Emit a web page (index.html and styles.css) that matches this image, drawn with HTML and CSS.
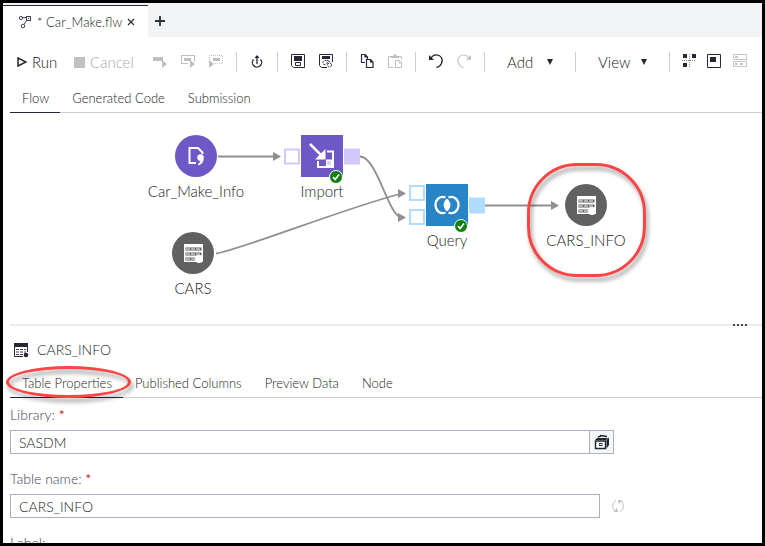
FILE: index.html
```html
<!DOCTYPE html>
<html lang="en">
<head>
<meta charset="utf-8">
<title>Car_Make.flw</title>
<link rel="stylesheet" href="styles.css">
</head>
<body>
<div class="app">
  <header class="filebar">
    <div class="file-tab">
      <svg class="flow-icon" width="14" height="14" viewBox="0 0 14 14" fill="none" stroke="#3d4250"><circle cx="3" cy="3" r="1.6"/><circle cx="5" cy="11" r="1.8"/><path d="M4.6 2.6H8M9 5 6 9.4"/><rect x="8.5" y="1.5" width="4" height="4"/><path d="M10.500 3v1"/></svg>
      <span class="file-name">* Car_Make.flw</span>
      <button class="close" aria-label="Close tab"><svg width="8" height="8" viewBox="0 0 8 8" stroke="#2b2f3d" stroke-width="1.2"><path d="m1 1 6 6M7 1 1 7"/></svg></button>
    </div>
    <button class="new-tab" aria-label="New tab"><svg width="10" height="10" viewBox="0 0 10 10" stroke="#2b2f3d" stroke-width="1.8"><path d="M5 0v10M0 5h10"/></svg></button>
  </header>

  <div class="toolbar" role="toolbar">
    <button class="run"><svg width="10" height="10" viewBox="0 0 10 10" fill="none" stroke="#20242f" stroke-width="1.5"><path d="M1 1v8l8-4z"/></svg>Run</button>
    <button class="cancel" disabled><svg width="11" height="11" viewBox="0 0 11 11" fill="#c1c1c1"><path d="M0 0h11v11H0z"/></svg>Cancel</button>
    <button class="tool" disabled aria-label="Run node"><svg width="16" height="16" viewBox="0 0 16 16" fill="#bfbfbf"><path d="M1 3h10v4H1zM10 6l5 4-5 4z"/></svg></button>
    <button class="tool" disabled aria-label="Run to node"><svg width="16" height="16" viewBox="0 0 16 16" fill="#bfbfbf"><path d="M1 1h14v7h-1V2H2v7h6v1H1z"/><path d="M4 4h7v3H4zM10 6l5 4-5 4z"/></svg></button>
    <button class="tool" disabled aria-label="Run from node"><svg width="16" height="16" viewBox="0 0 16 16" fill="#bfbfbf"><path d="M5 4h7v3H5zM1 6l5 4-5 4z"/><path d="M1.500 6V1.500h13v8H7" fill="none" stroke="#bfbfbf" stroke-dasharray="1 1"/></svg></button>
    <span class="sep"></span>
    <button class="tool" aria-label="Share"><svg width="16" height="16" viewBox="0 0 16 16" fill="none" stroke="#252936" stroke-width="1.3"><path d="M4.500 5.500a4.600 4.600 0 1 0 7 0M8 10V2"/><path d="m5.500 4 2.500-3 2.500 3z" fill="#252936" stroke="none"/></svg></button>
    <span class="sep"></span>
    <button class="tool" aria-label="Save"><svg width="16" height="16" viewBox="0 0 16 16" fill="none" stroke="#252936"><path d="M1.500 .5h13v13H3.500l-2-2z"/><path d="M4 2h8v5H4z" fill="#252936" stroke="none"/><path d="M5.500 8.500h5v3h-5z"/></svg></button>
    <button class="tool" aria-label="Save as"><svg width="16" height="16" viewBox="0 0 16 16" fill="none" stroke="#252936"><path d="M14.500 8V.5h-13v11l2 2H9"/><path d="M4 2h8v3H4z" fill="#252936" stroke="none"/><circle cx="7" cy="8.500" r="2.200" stroke-dasharray="2 1"/><circle cx="11.500" cy="11" r="2" stroke-dasharray="2 1"/><path d="m9 6 3 2"/></svg></button>
    <span class="sep"></span>
    <button class="tool" aria-label="Copy"><svg width="16" height="16" viewBox="0 0 16 16" fill="none" stroke="#252936" stroke-width="1.2"><path d="M6 8.500H2.500v-8H6L8.500 3v2M6 .5V3h2.500M7.500 5.500h4l2.500 2.500v5.500H7.500zM11.500 5.500V8H14"/></svg></button>
    <button class="tool" disabled aria-label="Paste"><svg width="16" height="16" viewBox="0 0 16 16" fill="none" stroke="#bfbfbf"><path d="M6.500 13.500h-5v-11H4M12 2.500h2.500V5M8.500 6.500h4l2 2v5h-6zM12 6.500v2.500h2.500"/><path d="M4 2h2l1-1.500h2L10 2h2v2H4z" fill="#bfbfbf" stroke="none"/></svg></button>
    <span class="sep"></span>
    <button class="tool" aria-label="Undo"><svg width="16" height="16" viewBox="0 0 16 16" fill="none" stroke="#252936" stroke-width="1.300"><path d="M3 4C5.500 0 11 0 13.300 3.500S13 12.500 8.500 13.500"/><path d="M1 1v5h5z" fill="#252936" stroke="none"/></svg></button>
    <button class="tool" disabled aria-label="Redo"><svg width="16" height="16" viewBox="0 0 16 16" fill="none" stroke="#c4c4c4" stroke-width="1.100"><path d="M13 4C10.500 0 5 0 2.700 3.500S3 12.500 7.500 13.500"/><path d="M15 1v5h-5z" fill="#c4c4c4" stroke="none"/></svg></button>
    <span class="sep"></span>
    <button class="menu">Add<svg width="6" height="6" viewBox="0 0 6 6" fill="#252936"><path d="M0 0h6L3 6z"/></svg></button>
    <span class="sep"></span>
    <button class="menu menu-wide">View<svg width="6" height="6" viewBox="0 0 6 6" fill="#252936"><path d="M0 0h6L3 6z"/></svg></button>
    <span class="sep"></span>
    <button class="tool tool-narrow" aria-label="Arrange nodes"><svg width="16" height="16" viewBox="0 0 16 16" fill="#252936"><path d="M2 0h4v4H2zM11 0h4v4h-4zM2 9h4v4H2z"/><path d="M1 6.500h14M8.500 0v14" stroke="#8a7f7a" stroke-dasharray="1 1"/></svg></button>
    <button class="tool tool-narrow" aria-label="Overview"><svg width="16" height="16" viewBox="0 0 16 16"><path d="M1.500 .5h13v13h-13z" fill="none" stroke="#252936"/><path d="M4 3h6v5H4z" fill="#252936"/></svg></button>
    <button class="tool" disabled aria-label="Swimlanes"><svg width="16" height="16" viewBox="0 0 16 16"><path d="M1.500 .5h13v5h-13zM1.500 7.500h13v5h-13z" fill="none" stroke="#c4c4c4"/><path d="M3 2h3v2H3zM3 9h3v2H3zM8 9h3v2H8z" fill="#c4c4c4"/></svg></button>
  </div>

  <nav class="tabs">
    <a href="#flow" class="tab active">Flow</a>
    <a href="#code" class="tab">Generated Code</a>
    <a href="#submission" class="tab">Submission</a>
  </nav>

  <main class="canvas">
    <svg class="wires" width="759" height="211" viewBox="3 113 759 211" fill="none" stroke="#8f8f8f" stroke-width="1.8">
      <path d="M218 156.500h57M216 253.500C243 249 345 208 400 194M360 156.500C376 156 388 213 400 217M485 205.500h68"/>
      <path d="m273 152 8 4.500-8 4.500zM398 189l8 4.500-8 4.500zM398 213l8 4.500-8 4.500zM551 201l8 4.500-8 4.500z" fill="#8f8f8f" stroke="none"/>
      <g stroke-width="2"><path d="M285 149.500h14v14h-14z" stroke="#d4c7fb"/><path d="M410 186h14v14h-14zM410 210h14v14h-14z" stroke="#b0dcff"/></g>
      <path d="M344 148.500h16v16h-16z" fill="#d4c7fb" stroke="none"/>
      <path d="M469 197.500h16v16h-16z" fill="#b0dcff" stroke="none"/>
    </svg>
    <div class="node node-file">
      <svg width="42" height="42" viewBox="0 0 42 42"><circle cx="21" cy="21" r="21" fill="#6d58c6"/><path d="M21 28h-6.500V13H23l4.500 4.500V19" fill="none" stroke="#fff" stroke-width="2"/><path d="M22.300 22.700a3.200 3.200 0 0 1 6.500-.4c.2 4-2 7.300-5.300 8.200l-.5-1.500c1.500-.7 2.300-1.800 2.400-3.200-1.700.2-3.100-1.200-3.100-3.100z" fill="#fff"/></svg>
      <span>Car_Make_Info</span>
    </div>
    <div class="node node-import">
      <svg width="42" height="42" viewBox="0 0 42 42"><path d="M0 0h42v42H0z" fill="#6d58c6"/><path d="m9 9 12 12" stroke="#fff" stroke-width="2.500"/><path d="M24.500 14v10.500H14z" fill="#fff"/><path d="M26 16.500h6V32H17v-6" fill="none" stroke="#fff" stroke-width="2"/><path d="M25 24.500h7V32h-7z" fill="#fff"/><path d="M26 26h4v4h-4z" fill="#d8d0f5"/></svg>
      <svg class="badge" width="14" height="14" viewBox="0 0 14 14"><circle cx="7" cy="7" r="6.500" fill="#108010" stroke="#fff"/><path d="m4 7.200 2.200 2.300L10 4.600" fill="none" stroke="#fff" stroke-width="1.700"/></svg>
      <span>Import</span>
    </div>
    <div class="node node-query">
      <svg width="42" height="42" viewBox="0 0 42 42"><path d="M0 0h42v42H0z" fill="#2784c6"/><path d="M19.500 13.500c-5-2.200-10 1.700-10 7.500s5 9.700 10 7.500M22.500 13.500c5-2.200 10 1.700 10 7.500s-5 9.700-10 7.500" fill="none" stroke="#fff" stroke-width="2.200"/><path d="M21 14.500c4.600 4 4.600 9 0 13-4.600-4-4.600-9 0-13z" fill="#fff"/></svg>
      <svg class="badge" width="14" height="14" viewBox="0 0 14 14"><circle cx="7" cy="7" r="6.500" fill="#108010" stroke="#fff"/><path d="m4 7.200 2.200 2.300L10 4.600" fill="none" stroke="#fff" stroke-width="1.700"/></svg>
      <span>Query</span>
    </div>
    <div class="node node-cars">
      <svg width="42" height="42" viewBox="0 0 42 42"><circle cx="21" cy="21" r="21" fill="#616161"/><path d="M12 12h19v18H12z" fill="#fff"/><path d="M13.500 17h16M13.500 22h16M13.500 27h10" stroke="#616161" stroke-width="3"/><path d="M14 17h15M14 22h15M14 27h9" stroke="#fff" stroke-dasharray="4 1"/><circle cx="27" cy="27" r="4" fill="#fff"/></svg>
      <span>CARS</span>
    </div>
    <div class="node node-cars-info">
      <svg width="42" height="42" viewBox="0 0 42 42"><circle cx="21" cy="21" r="21" fill="#616161"/><path d="M12 12h19v18H12z" fill="#fff"/><path d="M13.500 17h16M13.500 22h16M13.500 27h10" stroke="#616161" stroke-width="3"/><path d="M14 17h15M14 22h15M14 27h9" stroke="#fff" stroke-dasharray="4 1"/><circle cx="27" cy="27" r="4" fill="#fff"/></svg>
      <span>CARS_INFO</span>
    </div>
    <div class="mark mark-node"></div>
  </main>

  <div class="splitter"><i></i><i></i><i></i><i></i></div>

  <section class="details">
    <h2><svg width="15" height="15" viewBox="0 0 15 15"><path d="M.5 1v12.500H9M13.500 9V1" fill="none" stroke="#252936"/><path d="M0 0h14v4H0z" fill="#252936"/><path d="M2 6.500h10M2 9h10M2 11.500h7" stroke="#4c3350" stroke-width="1.200" stroke-dasharray="3 1"/><circle cx="12" cy="12" r="2.300" fill="#252936"/></svg>CARS_INFO</h2>
    <nav class="tabs">
      <a href="#properties" class="tab active">Table Properties<span class="mark mark-tab"></span></a>
      <a href="#columns" class="tab">Published Columns</a>
      <a href="#preview" class="tab">Preview Data</a>
      <a href="#node" class="tab">Node</a>
    </nav>
    <form class="form">
      <label for="library">Library: <b>*</b></label>
      <div class="field">
        <input id="library" type="text" value="SASDM">
        <button type="button" class="browse" aria-label="Browse libraries"><svg width="16" height="16" viewBox="0 0 16 16"><path d="M1.500 7h10v7.500h-10z" fill="#fff" stroke="#20242f" stroke-width="1.400"/><path d="M1 6l2-2h11l-2 2zM12.500 6 15 3.500V11l-2.500 3.500z" fill="#20242f"/><path d="m6 1.500 7 1M4 3l3-1" stroke="#20242f" stroke-width="1.500"/><path d="M5 9h3.500v3H5z" fill="#20242f"/><path d="M5.500 10.500h2.500" stroke="#fff"/></svg></button>
      </div>
      <label for="table">Table name: <b>*</b></label>
      <div class="field">
        <input id="table" type="text" value="CARS_INFO">
        <button type="button" class="refresh" disabled aria-label="Refresh"><svg width="12" height="14" viewBox="0 0 12 14" fill="none" stroke="#bdbdbd"><path d="M4 1.500C0 3.500-.5 9 3 12M8 12.500c4-2 4.500-7.500 1-10.500"/><path d="M6 1h4L7 5zM6 13H2l3-4z" fill="#bdbdbd" stroke="none"/></svg></button>
      </div>
      <label for="label">Label:</label>
      <div class="field"><input id="label" type="text"></div>
    </form>
  </section>
</div>
</body>
</html>
```
FILE: styles.css
```css
* { box-sizing: border-box; }
body { margin: 0; font: 300 14px/20px Lato, "Open Sans", sans-serif; color: #181c22; background: #fff; }
button, input { font: inherit; color: inherit; margin: 0; padding: 0; border: 0; background: none; }
svg { display: block; flex: none; }
a { color: inherit; text-decoration: none; }

.app { display: flex; flex-direction: column; height: 100vh; border: 3px solid #000; overflow: hidden; }
.app > * { flex: none; }

.filebar { display: flex; height: 34px; background: #f2f3f5; }
.file-tab { display: flex; align-items: center; width: 145px; margin-top: 2px; padding-left: 15px; border-top: 1px solid #252936; background: #fff; font-size: 13px; }
.file-name { flex: 1; padding-left: 5px; white-space: nowrap; }
.close { padding: 4px; margin-right: 9px; }
.new-tab { padding: 2px 7px 0; }

.toolbar { display: flex; align-items: center; height: 50px; padding-left: 12px; font-size: 15px; }
.run, .cancel { display: flex; align-items: center; gap: 5px; padding-left: 2px; }
.run { width: 57px; }
.cancel { width: 74px; color: #aaa; }
.tool { display: flex; justify-content: center; width: 28px; }
.tool-narrow { width: 25px; }
.sep { width: 1px; height: 20px; margin: 0 6px; background: #cbcdd4; }
.menu { display: flex; align-items: center; justify-content: space-between; width: 78px; padding: 0 16px; }
.menu-wide { width: 81px; }

.tabs { display: flex; height: 26px; margin-left: 7px; border-bottom: 1px solid #cdced6; font-size: 13px; }
.tab { position: relative; height: 26px; padding: 0 11px 0 12px; line-height: 22px; white-space: nowrap; border-bottom: 1px solid transparent; }
.active { border-color: #252936; }

.canvas { position: relative; height: 211px; }
.wires { position: absolute; left: 0; top: 0; }
.node { position: absolute; width: 42px; display: flex; flex-direction: column; align-items: center; gap: 4px; font-size: 15px; white-space: nowrap; }
.node-file { left: 172px; top: 22px; }
.node-import { left: 298px; top: 22px; }
.node-query { left: 423px; top: 71px; }
.node-cars { left: 169px; top: 119px; }
.node-cars-info { left: 562px; top: 71px; }
.badge { position: absolute; left: 28px; top: 35px; }
.mark { position: absolute; border: 3px solid #fb4444; pointer-events: none; filter: drop-shadow(2px 4px 2px rgba(0, 0, 0, .4)); }
.mark-node { left: 524px; top: 50px; width: 119px; height: 114px; border-radius: 50px; }
.mark-tab { left: -4px; top: -6px; width: 125px; height: 32px; border-radius: 50%; }

.splitter { display: flex; justify-content: flex-end; gap: 2px; height: 2px; margin-left: 7px; padding-right: 15px; background: #ebebed; }
.splitter i { width: 2px; background: #43464f; }

.details h2 { display: flex; align-items: center; gap: 8px; height: 46px; margin: 0; padding: 2px 0 0 11px; font-size: 14px; font-weight: 300; }
.form { padding: 7px 0 0 7px; color: #3c4252; }
.form label { display: block; }
.form b { color: #d8232a; font-weight: 400; }
.field { display: flex; align-items: center; margin: 5px 0 15px; color: #181c22; }
.field input { width: 79%; max-width: 590px; height: 24px; padding: 0 8px; border: 1px solid #a9b0bf; background: #fff; }
.browse { display: flex; align-items: center; justify-content: center; width: 25px; height: 24px; border: 1px solid #a9b0bf; margin-left: -1px; background: #f5f6f8; }
.field #library { max-width: 580px; }
.refresh { padding-left: 12px; }
```
